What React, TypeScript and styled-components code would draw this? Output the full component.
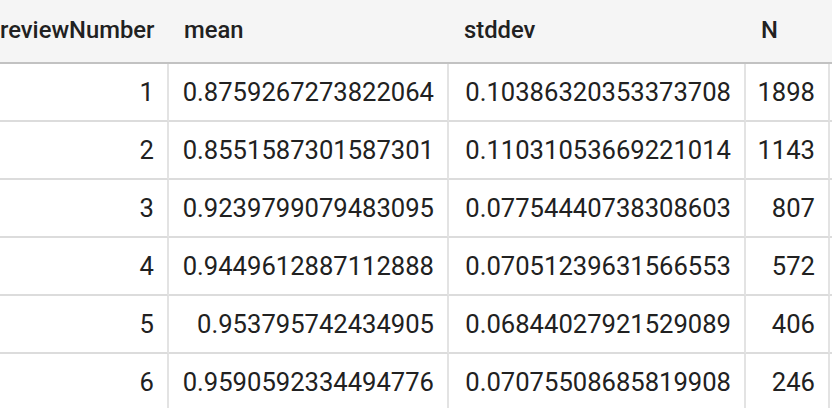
import React from "react";
import styled, { createGlobalStyle } from "styled-components";

const GlobalStyle = createGlobalStyle`
  html, body {
    margin: 0;
    padding: 0;
    background: #ffffff;
  }
  body {
    font-family: Roboto, "Noto Sans", "Liberation Sans", sans-serif;
  }
`;

const Viewport = styled.div`
  width: 832px;
  height: 408px;
  overflow: hidden;
  background: #ffffff;
`;

const Table = styled.div`
  display: grid;
  grid-template-columns: 184px 280px 297px 84px 240px;
  margin-left: -15px;
  width: max-content;
`;

const HeadCell = styled.div`
  box-sizing: border-box;
  height: 64px;
  display: flex;
  align-items: center;
  padding: 0 15px 2px 15px;
  background: #f5f5f5;
  border-bottom: 2px solid #c2c2c2;
  font-size: 23.8px;
  font-weight: 500;
  color: #212121;
  white-space: nowrap;
`;

const Cell = styled.div`
  box-sizing: border-box;
  height: 58px;
  display: flex;
  align-items: center;
  justify-content: flex-end;
  padding: 0 13px 0 12px;
  border-right: 2px solid #e3e3e3;
  border-bottom: 2px solid #dcdcdc;
  font-size: 25.6px;
  font-weight: 400;
  color: #212121;
  white-space: nowrap;
`;

const rows: [number, string, string, number][] = [
  [1, "0.8759267273822064", "0.10386320353373708", 1898],
  [2, "0.8551587301587301", "0.11031053669221014", 1143],
  [3, "0.9239799079483095", "0.07754440738308603", 807],
  [4, "0.9449612887112888", "0.07051239631566553", 572],
  [5, "0.953795742434905", "0.06844027921529089", 406],
  [6, "0.9590592334494776", "0.07075508685819908", 246],
];

export default function App() {
  return (
    <Viewport>
      <GlobalStyle />
      <Table>
        <HeadCell>reviewNumber</HeadCell>
        <HeadCell>mean</HeadCell>
        <HeadCell>stddev</HeadCell>
        <HeadCell>N</HeadCell>
        <HeadCell />
        {rows.map(([n, mean, sd, count]) => (
          <React.Fragment key={n}>
            <Cell>{n}</Cell>
            <Cell>{mean}</Cell>
            <Cell>{sd}</Cell>
            <Cell>{count}</Cell>
            <Cell />
          </React.Fragment>
        ))}
      </Table>
    </Viewport>
  );
}
